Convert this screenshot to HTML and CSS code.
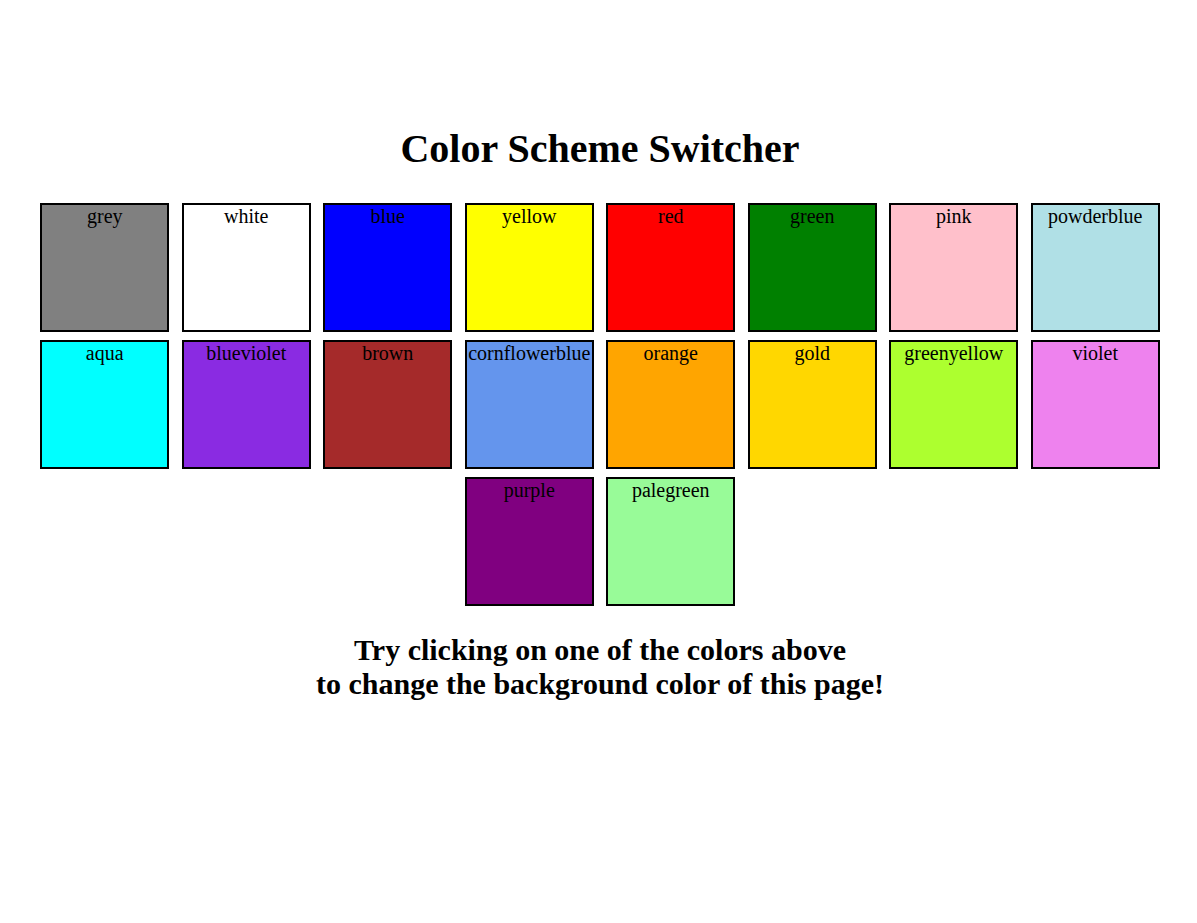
FILE: index.html
```html
<!DOCTYPE html>
<html lang="en">
<head>
<meta charset="utf-8">
<title>Color Scheme Switcher</title>
<link rel="stylesheet" href="styles.css">
</head>
<body>
<main class="canvas">
<h1 class="title">Color Scheme Switcher</h1>
<div class="swatches">
<button class="swatch grey" type="button">grey</button>
<button class="swatch white" type="button">white</button>
<button class="swatch blue" type="button">blue</button>
<button class="swatch yellow" type="button">yellow</button>
<button class="swatch red" type="button">red</button>
<button class="swatch green" type="button">green</button>
<button class="swatch pink" type="button">pink</button>
<button class="swatch powderblue" type="button">powderblue</button>
<button class="swatch aqua" type="button">aqua</button>
<button class="swatch blueviolet" type="button">blueviolet</button>
<button class="swatch brown" type="button">brown</button>
<button class="swatch cornflowerblue" type="button">cornflowerblue</button>
<button class="swatch orange" type="button">orange</button>
<button class="swatch gold" type="button">gold</button>
<button class="swatch greenyellow" type="button">greenyellow</button>
<button class="swatch violet" type="button">violet</button>
<button class="swatch purple" type="button">purple</button>
<button class="swatch palegreen" type="button">palegreen</button>
</div>
<h2 class="hint">Try clicking on one of the colors above<br>to change the background color of this page!</h2>
</main>
<script src="script.js"></script>
</body>
</html>
```
FILE: styles.css
```css
body {
  margin: 0;
  background: white;
  color: black;
  font-family: "Liberation Serif", "Times New Roman", serif;
}

.canvas {
  padding: 126px 32px 80px 35px;
  text-align: center;
}

.title {
  margin: 0 0 27px;
  font-size: 40px;
  line-height: 46px;
}

.swatches {
  font-size: 18px;
}

.swatch {
  display: inline-flex;
  justify-content: center;
  align-items: flex-start;
  box-sizing: border-box;
  width: 129px;
  height: 129px;
  margin: 4px;
  padding: 0;
  border: 2px solid black;
  border-radius: 0;
  color: black;
  font-family: inherit;
  font-size: 20px;
  line-height: 23px;
  vertical-align: top;
  cursor: pointer;
}

.hint {
  margin: 23px 0 0;
  font-size: 30px;
  line-height: 34px;
}

.grey { background: grey; }
.white { background: white; }
.blue { background: blue; }
.yellow { background: yellow; }
.red { background: red; }
.green { background: green; }
.pink { background: pink; }
.powderblue { background: powderblue; }
.aqua { background: aqua; }
.blueviolet { background: blueviolet; }
.brown { background: brown; }
.cornflowerblue { background: cornflowerblue; }
.orange { background: orange; }
.gold { background: gold; }
.greenyellow { background: greenyellow; }
.violet { background: violet; }
.purple { background: purple; }
.palegreen { background: palegreen; }
```
FILE: script.js
```js
document.querySelectorAll('.swatch').forEach((swatch) => {
  swatch.addEventListener('click', () => {
    document.body.style.backgroundColor = swatch.textContent;
  });
});
```
